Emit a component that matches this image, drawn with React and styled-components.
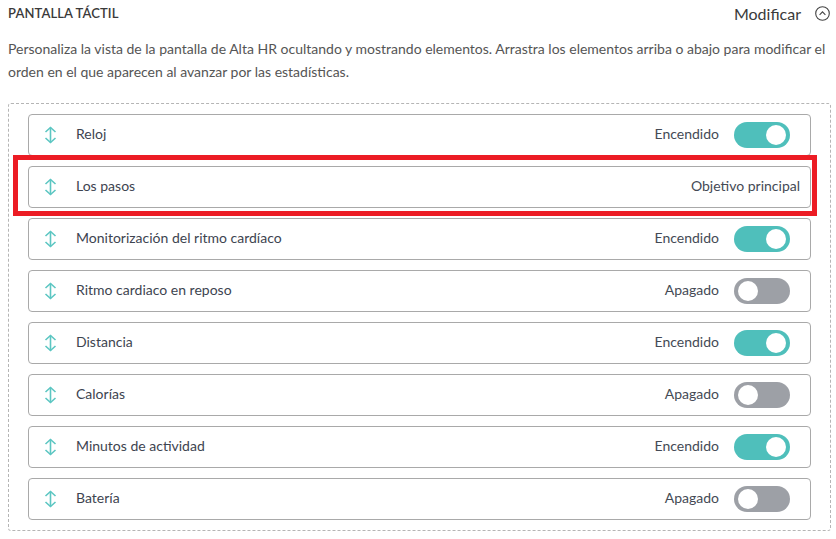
import React from "react";
import styled, { createGlobalStyle } from "styled-components";

const Global = createGlobalStyle`
  html, body { margin: 0; padding: 0; background: #fff; }
  body { font-family: "Lato", "Open Sans", sans-serif; color: #444; }
`;

const Page = styled.div`
  width: 836px;
  height: 539px;
  box-sizing: border-box;
  padding: 0 5px 0 8px;
`;

const Header = styled.div`
  display: flex;
  align-items: center;
  justify-content: space-between;
  height: 26px;
`;

const Title = styled.h2`
  margin: 0;
  font-size: 13px;
  font-weight: 600;
  color: #3a3a3a;
  letter-spacing: 0.1px;
`;

const EditButton = styled.button`
  display: flex;
  align-items: center;
  gap: 14px;
  border: 0;
  background: none;
  padding: 0;
  margin-right: 1px;
  font: inherit;
  font-size: 16px;
  color: #3a3a3a;
  cursor: pointer;
`;

const Intro = styled.p`
  margin: 11px 0 0;
  font-size: 14px;
  line-height: 23px;
  color: #555;
`;

const DropZone = styled.div`
  margin-top: 20px;
  border: 1px dashed #b5b5b5;
  border-radius: 3px;
  padding: 10px 19px;
  display: flex;
  flex-direction: column;
  gap: 10px;
`;

const Row = styled.div`
  position: relative;
  height: 42px;
  box-sizing: border-box;
  border: 1px solid #a9a9a9;
  border-radius: 4px;
  display: flex;
  align-items: center;
  padding: 0 ${(p) => (p.$plain ? "10px" : "20px")} 0 15px;
  background: #fff;
`;

const Handle = styled.span`
  display: flex;
  width: 13px;
  margin-right: 19px;
`;

const Label = styled.span`
  flex: 1;
  margin-bottom: 3px;
  font-size: 14px;
  color: #3d4450;
`;

const Status = styled.span`
  margin-bottom: 3px;
  font-size: 14px;
  color: #444a55;
`;

const Toggle = styled.span`
  position: relative;
  margin-left: 15px;
  width: 56px;
  height: 26px;
  border-radius: 13px;
  background: ${(p) => (p.$on ? "#4fbfbb" : "#9da0a6")};
  &::after {
    content: "";
    position: absolute;
    top: 3px;
    left: ${(p) => (p.$on ? "32px" : "4px")};
    width: 20px;
    height: 20px;
    border-radius: 50%;
    background: #fff;
  }
`;

const Highlight = styled.span`
  position: absolute;
  left: -16px;
  right: -7px;
  top: -12px;
  bottom: -9px;
  border: 5px solid #ec1c24;
  pointer-events: none;
`;

const DragIcon = () => (
  <svg width="13" height="18" viewBox="0 0 13 18" fill="none" stroke="#5cc6c2" strokeWidth="1.6">
    <path d="M6.5 1.5v15" />
    <path d="M1.5 6l5-4.5 5 4.5" />
    <path d="M1.5 12l5 4.5 5-4.5" />
  </svg>
);

const CollapseIcon = () => (
  <svg width="15" height="15" viewBox="0 0 15 15" fill="none" stroke="#444" strokeWidth="1.1">
    <circle cx="7.5" cy="7.5" r="6.8" />
    <path d="M4.6 8.8l2.9-2.9 2.9 2.9" />
  </svg>
);

const items = [
  { label: "Reloj", status: "Encendido", on: true },
  { label: "Los pasos", status: "Objetivo principal", fixed: true },
  { label: "Monitorización del ritmo cardíaco", status: "Encendido", on: true },
  { label: "Ritmo cardiaco en reposo", status: "Apagado", on: false },
  { label: "Distancia", status: "Encendido", on: true },
  { label: "Calorías", status: "Apagado", on: false },
  { label: "Minutos de actividad", status: "Encendido", on: true },
  { label: "Batería", status: "Apagado", on: false },
];

export default function App() {
  return (
    <Page>
      <Global />
      <Header>
        <Title>PANTALLA TÁCTIL</Title>
        <EditButton>
          Modificar
          <CollapseIcon />
        </EditButton>
      </Header>
      <Intro>
        Personaliza la vista de la pantalla de Alta HR ocultando y mostrando elementos. Arrastra los
        elementos arriba o abajo para modificar el orden en el que aparecen al avanzar por las
        estadísticas.
      </Intro>
      <DropZone>
        {items.map((it) => (
          <Row key={it.label} $plain={it.fixed}>
            <Handle>
              <DragIcon />
            </Handle>
            <Label>{it.label}</Label>
            <Status>{it.status}</Status>
            {!it.fixed && <Toggle $on={it.on} />}
            {it.fixed && <Highlight />}
          </Row>
        ))}
      </DropZone>
    </Page>
  );
}
